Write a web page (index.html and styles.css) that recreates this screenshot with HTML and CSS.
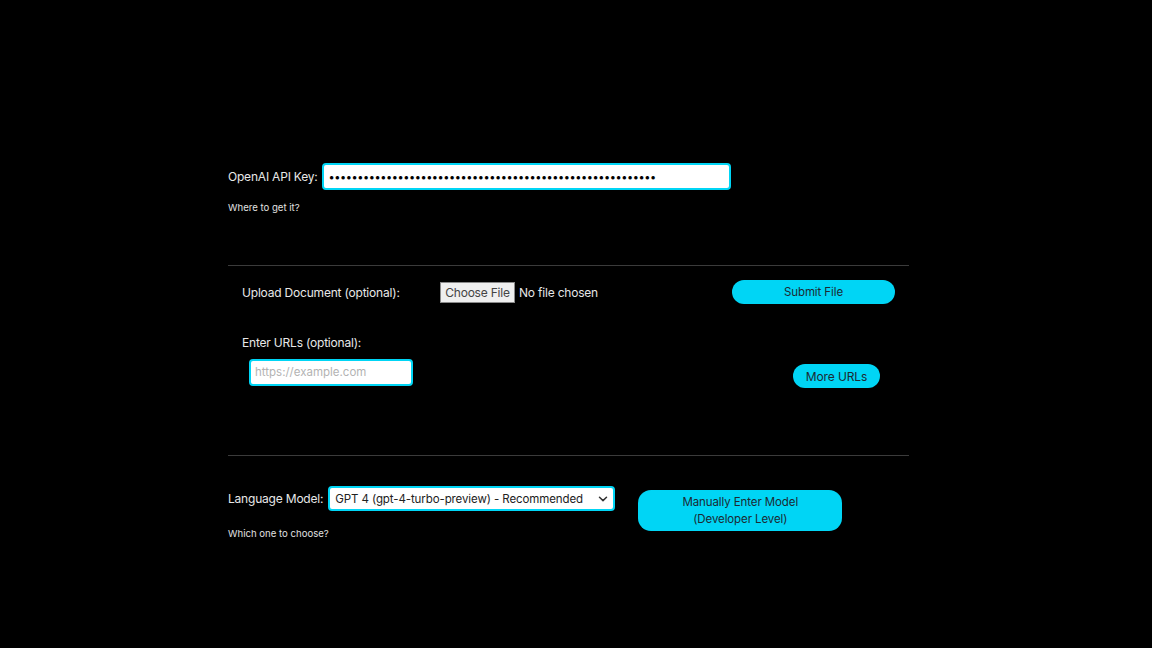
FILE: index.html
```html
<!DOCTYPE html>
<html lang="en">
<head>
  <meta charset="UTF-8">
  <meta name="viewport" content="width=device-width, initial-scale=1.0">
  <title>Settings</title>
  <link rel="stylesheet" href="styles.css">
</head>
<body>
  <div class="settings">
    <div class="key-section">
      <div class="row">
        <label class="label" for="api-key">OpenAI API Key:</label>
        <input id="api-key" class="key-input" type="password" value="sk-0123456789abcdefghijklmnopqrstuvwxyzABCDEFGHIJKLMNOPQR">
      </div>
      <p class="hint">Where to get it?</p>
    </div>

    <hr class="divider">

    <div class="docs-section">
      <div class="row upload-row">
        <span class="label upload-label">Upload Document (optional):</span>
        <span class="file-picker">
          <span class="file-button">Choose File</span>
          <span class="file-name">No file chosen</span>
        </span>
        <button class="pill submit-btn">Submit File</button>
      </div>

      <p class="label urls-label">Enter URLs (optional):</p>
      <div class="row urls-row">
        <input class="url-input" type="text" placeholder="https://example.com">
        <button class="pill more-btn">More URLs</button>
      </div>
    </div>

    <hr class="divider">

    <div class="model-section">
      <div class="model-left">
        <div class="row">
          <label class="label" for="model">Language Model:</label>
          <span class="select-wrap">
            <select id="model" class="model-select">
              <option>GPT 4 (gpt-4-turbo-preview) - Recommended</option>
              <option>GPT 3.5 (gpt-3.5-turbo)</option>
            </select>
            <svg class="chevron" width="10" height="6" viewBox="0 0 10 6"><path d="M1.5 1.2 5 4.6 8.5 1.2" fill="none" stroke="#333" stroke-width="1.5" stroke-linecap="round" stroke-linejoin="round"/></svg>
          </span>
        </div>
        <p class="hint model-hint">Which one to choose?</p>
      </div>
      <button class="pill manual-btn">Manually Enter Model<br>(Developer Level)</button>
    </div>
  </div>
</body>
</html>
```

FILE: styles.css
```css
body {
  margin: 0;
  background-color: #000;
  color: #e6e6e6;
  font-family: Inter, "Noto Sans", sans-serif;
  height: 100vh;
}

.settings {
  width: 681px;
  margin-left: 228px;
  padding-top: 163px;
}

.row {
  display: flex;
  align-items: center;
}

.label {
  font-size: 12px;
  letter-spacing: -0.2px;
  color: #e8e8e8;
}

.key-section .label {
  margin-right: 4px;
}

.key-input {
  width: 409px;
  height: 27px;
  box-sizing: border-box;
  border: 2px solid #00d5f5;
  border-radius: 4px;
  background: #fff;
  padding: 0 5px;
  font-family: Inter, sans-serif;
  font-size: 11px;
  letter-spacing: -0.45px;
  outline: none;
}

.hint {
  font-size: 9.6px;
  margin: 12px 0 0;
  color: #e0e0e0;
}

.divider {
  border: none;
  border-top: 1px solid #3b3b3b;
  margin: 0;
}

.key-section {
  height: 102px;
}

.docs-section {
  padding: 14px 14px 0;
  height: 175px;
}

.upload-label {
  width: 198px;
  flex-shrink: 0;
}

.file-picker {
  display: flex;
  align-items: center;
  font-size: 12px;
  letter-spacing: -0.2px;
  white-space: nowrap;
}

.file-button {
  background: #efefef;
  color: #444;
  border: 1px solid #8a8a8a;
  height: 21px;
  box-sizing: border-box;
  display: flex;
  align-items: center;
  justify-content: center;
  width: 75px;
}

.file-name {
  margin-left: 4px;
}

.pill {
  background: #00d5f5;
  color: #1c2a33;
  border: none;
  border-radius: 14px;
  font-family: Inter, sans-serif;
  font-size: 11.5px;
  letter-spacing: -0.1px;
  cursor: pointer;
}

.submit-btn {
  margin-left: auto;
  width: 163px;
  height: 24px;
}

.urls-label {
  margin: 31px 0 0;
}

.urls-row {
  margin-top: 6px;
  padding-left: 7px;
  padding-right: 15px;
}

.url-input {
  width: 164px;
  height: 27px;
  box-sizing: border-box;
  border: 2px solid #00d5f5;
  border-radius: 4px;
  padding: 0 4px;
  font-family: Inter, sans-serif;
  font-size: 11.5px;
  outline: none;
}

.url-input::placeholder {
  color: #b3b3b3;
}

.more-btn {
  margin-left: auto;
  width: 87px;
  height: 24px;
  margin-top: 8px;
  font-size: 12px;
}

.model-section {
  display: flex;
  align-items: flex-start;
  padding-top: 30px;
}

.model-section .label {
  margin-right: 5px;
}

.select-wrap {
  position: relative;
  display: flex;
}

.model-select {
  appearance: none;
  width: 287px;
  height: 25px;
  border: 2px solid #00d5f5;
  border-radius: 4px;
  background: #fff;
  color: #222;
  font-family: Inter, sans-serif;
  font-size: 11.5px;
  letter-spacing: -0.1px;
  padding: 0 5px;
  outline: none;
}

.chevron {
  position: absolute;
  right: 7px;
  top: 10px;
}

.model-hint {
  margin-top: 17px;
}

.manual-btn {
  margin-left: 23px;
  margin-top: 4px;
  width: 204px;
  height: 41px;
  border-radius: 13px;
  line-height: 17px;
}
```
